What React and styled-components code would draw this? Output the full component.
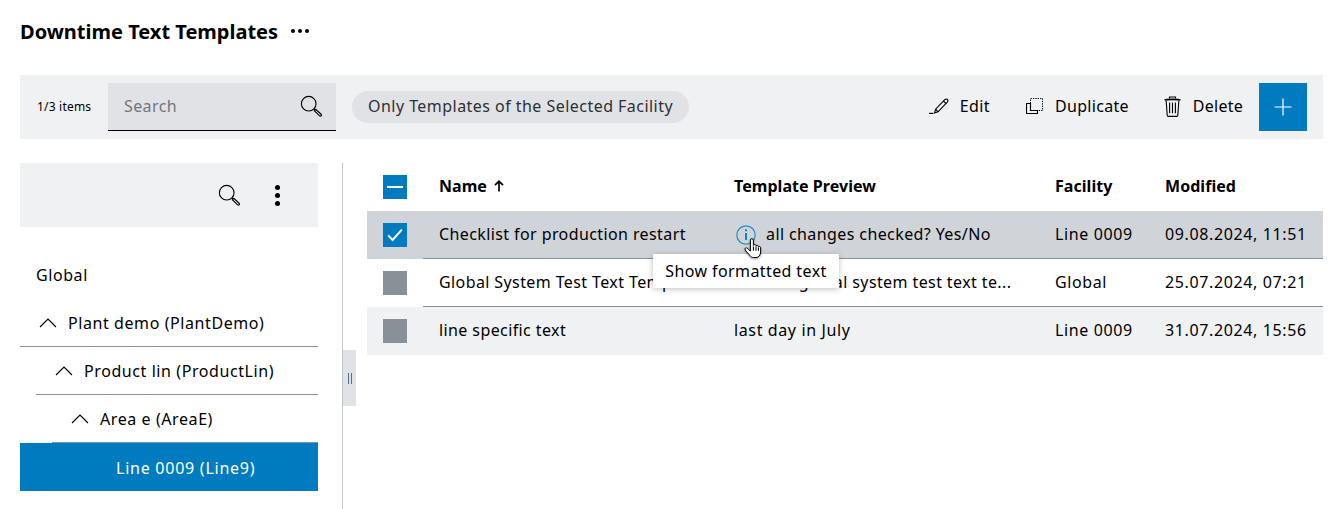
import React from "react";
import styled, { createGlobalStyle } from "styled-components";

const GlobalStyle = createGlobalStyle`
  html, body {
    margin: 0;
    padding: 0;
    background: #fff;
  }
  body {
    font-family: "Noto Sans", "Open Sans", sans-serif;
    font-size: 16px;
    letter-spacing: 0.4px;
    color: #000;
    overflow: hidden;
  }
`;

function SearchIcon() {
  return (
    <svg width="22" height="22" viewBox="0 0 24 24" fill="none" stroke="#000" strokeWidth="1.2">
      <circle cx="9.5" cy="9.5" r="8" />
      <path d="M15.2 15.2l1.2 1.2" />
      <path d="M15.6 17.2l1.6-1.6 5.8 5.4c.5.5.5 1.2 0 1.7-.5.4-1.1.4-1.6 0z" />
    </svg>
  );
}

function PencilIcon() {
  return (
    <svg width="20" height="16" viewBox="0 0 20 16" fill="none" stroke="#000" strokeWidth="1.1">
      <path d="M0 15.4h4.4" strokeWidth="1.2" />
      <path d="M5.6 15l1-3.8L15.8 1.6c.8-.8 1.9-.8 2.6-.1s.7 1.9-.1 2.6L9 13.8z" />
      <path d="M6.6 11.2L9 13.8M14.4 3l2.6 2.6" />
    </svg>
  );
}

function DuplicateIcon() {
  return (
    <svg width="17" height="16" viewBox="0 0 17 16" fill="none" stroke="#000">
      <path d="M4.5.5h12v12h-12z" strokeDasharray="1.3 1.1" strokeWidth="1" />
      <path d="M4.5 5.5h-4v10h11v-3h-7z" strokeWidth="1.1" />
    </svg>
  );
}

function TrashIcon() {
  return (
    <svg width="17" height="21" viewBox="0 0 17 21" fill="none" stroke="#000" strokeWidth="1.1">
      <path d="M5.5 2.6V1h6v1.6" />
      <path d="M.6 4.2c1.2-1.2 14.6-1.2 15.8 0" strokeWidth="1.8" />
      <path d="M2.2 5l1 14.2c0 .8.5 1.2 1.1 1.2h8.4c.6 0 1.1-.4 1.1-1.2L14.8 5" />
      <path d="M5.6 6.6v10.6M8.5 6.6v10.6M11.4 6.6v10.6" />
    </svg>
  );
}

function PlusIcon() {
  return (
    <svg width="18" height="18" viewBox="0 0 18 18" stroke="#fff" strokeWidth="1.2">
      <path d="M9 .5v17M.5 9h17" />
    </svg>
  );
}

function ChevronUp() {
  return (
    <svg width="18" height="10" viewBox="0 0 18 10" fill="none" stroke="#000" strokeWidth="1.1">
      <path d="M1 9l8-8 8 8" />
    </svg>
  );
}

function SortArrow() {
  return (
    <svg width="10" height="12" viewBox="0 0 10 12" fill="none" stroke="#000" strokeWidth="1.7">
      <path d="M5 11.5V1.5M1 5.2l4-4 4 4" />
    </svg>
  );
}

function CheckMark() {
  return (
    <svg width="16" height="14" viewBox="0 0 16 14" fill="none" stroke="#fff" strokeWidth="2">
      <path d="M1.2 7.4l4.4 4.6L14.8 1.6" />
    </svg>
  );
}

function InfoIcon() {
  return (
    <svg width="20" height="20" viewBox="0 0 20 20" fill="none" stroke="#1e8fd0" strokeWidth="1.2">
      <circle cx="10" cy="10" r="9.2" />
      <path d="M10 8v7" strokeWidth="1.8" stroke="#007bc0" />
      <path d="M10 4.2v2" strokeWidth="1.8" stroke="#007bc0" />
    </svg>
  );
}

function HandCursor() {
  return (
    <svg width="18" height="20" viewBox="0 0 18 20" fill="#fff" stroke="#000" strokeWidth="1" strokeLinejoin="round">
      <path d="M6.4 2c0-1.8 3-1.8 3 0v5.4c.3-1.2 2.4-1.2 2.6.2v.6c.3-1.1 2.3-1 2.4.3v.6c.4-1 2.2-.8 2.2.6v4.3c0 3-1.8 5.5-4.6 5.5H9.6c-1.8 0-3-.8-3.9-2.2L1.2 12c-1-1.7 1.2-3 2.4-1.6l2.8 2.8z" />
      <path d="M9.4 8.4v4.4M12 8.6v4.2M14.4 9.4v3.4" fill="none" />
    </svg>
  );
}

const Page = styled.div`
  width: 1338px;
  height: 509px;
  box-sizing: border-box;
  padding: 0 15px 0 20px;
  display: flex;
  flex-direction: column;
  overflow: hidden;
`;

const Header = styled.div`
  height: 63px;
  display: flex;
  align-items: center;
  gap: 13px;
  flex-shrink: 0;
`;

const Title = styled.h1`
  margin: 0;
  font-size: 20px;
  font-weight: 700;
  line-height: 28px;
  letter-spacing: 0;
`;

const Dots = styled.div`
  display: flex;
  gap: 3px;
  margin-top: -2px;
  span {
    width: 4px;
    height: 4px;
    border-radius: 50%;
    background: #000;
  }
`;

const Toolbar = styled.div`
  margin-top: 12px;
  height: 64px;
  background: #eff1f2;
  display: flex;
  align-items: center;
  padding: 0 16px 0 17px;
  flex-shrink: 0;
`;

const Count = styled.span`
  font-size: 12px;
  letter-spacing: 0.2px;
  width: 71px;
  padding-bottom: 1px;
`;

const SearchField = styled.div`
  width: 228px;
  height: 48px;
  box-sizing: border-box;
  background: #e0e2e5;
  border-bottom: 1px solid #000;
  display: flex;
  align-items: center;
  justify-content: space-between;
  padding: 0 14px 1px 16px;
  color: #71767c;
`;

const Chip = styled.div`
  margin-left: 16px;
  height: 32px;
  box-sizing: border-box;
  padding: 0 16px 2px;
  border-radius: 16px;
  background: #e0e2e5;
  display: flex;
  align-items: center;
  color: #2e3033;
  letter-spacing: 0.46px;
`;

const Actions = styled.div`
  margin-left: auto;
  display: flex;
  align-items: center;
`;

const ActionButton = styled.div`
  display: flex;
  align-items: center;
  gap: ${(p) => p.$gap}px;
  margin-right: ${(p) => p.$right}px;
  padding-bottom: 2px;
  letter-spacing: ${(p) => p.$spacing}px;
`;

const AddButton = styled.div`
  width: 48px;
  height: 48px;
  background: #007bc0;
  display: flex;
  align-items: center;
  justify-content: center;
`;

const Content = styled.div`
  margin-top: 24px;
  flex: 1;
  display: flex;
  min-height: 0;
`;

const Sidebar = styled.div`
  width: 298px;
  flex-shrink: 0;
`;

const SidebarBar = styled.div`
  height: 64px;
  background: #eff1f2;
  display: flex;
  align-items: center;
  justify-content: flex-end;
  padding-right: 38px;
  gap: 35px;
`;

const VerticalDots = styled.div`
  display: flex;
  flex-direction: column;
  gap: 3px;
  span {
    width: 5px;
    height: 5px;
    border-radius: 50%;
    background: #000;
  }
`;

const Tree = styled.div`
  margin-top: 24px;
`;

const TreeRow = styled.div`
  height: 48px;
  box-sizing: border-box;
  margin-left: ${(p) => p.$indent}px;
  padding-left: ${(p) => p.$pad}px;
  display: flex;
  align-items: center;
  gap: 11px;
  letter-spacing: 0.58px;
  border-bottom: ${(p) => (p.$line ? "1px solid #8a9097" : "none")};
`;

const SelectedRow = styled.div`
  height: 48px;
  box-sizing: border-box;
  background: #007bc0;
  color: #fff;
  display: flex;
  align-items: center;
  padding: 1px 0 0 96px;
  letter-spacing: 0.75px;
`;

const Splitter = styled.div`
  width: 25px;
  margin-left: 24px;
  flex-shrink: 0;
  border-left: 1px solid #c1c7cc;
  box-sizing: border-box;
  display: flex;
  align-items: flex-start;
`;

const SplitterHandle = styled.div`
  margin-top: 187px;
  width: 13px;
  height: 56px;
  background: #e0e2e5;
  display: flex;
  align-items: center;
  justify-content: center;
  gap: 2px;
  span {
    width: 1px;
    height: 11px;
    background: #4a6f94;
  }
`;

const Table = styled.div`
  flex: 1;
  min-width: 0;
`;

const Row = styled.div`
  height: 48px;
  display: grid;
  grid-template-columns: 56px 295px 321px 110px 1fr;
  background: ${(p) => p.$bg};
`;

const CheckCell = styled.div`
  display: flex;
  align-items: center;
  padding-left: 16px;
`;

const Cell = styled.div`
  position: relative;
  display: flex;
  align-items: center;
  gap: 7px;
  padding: 0 0 ${(p) => (p.$line ? 1 : 2)}px 16px;
  white-space: nowrap;
  font-weight: ${(p) => (p.$head ? 700 : 400)};
  letter-spacing: ${(p) => (p.$head ? "0.05px" : p.$digits ? "0.62px" : "0.4px")};
  box-sizing: border-box;
  border-bottom: ${(p) => (p.$line ? "1px solid #8a9097" : "none")};
`;

const Box = styled.div`
  width: 24px;
  height: 24px;
  background: ${(p) => (p.$on ? "#007bc0" : "#8a9097")};
  display: flex;
  align-items: center;
  justify-content: center;
`;

const Dash = styled.span`
  width: 16px;
  height: 2px;
  background: #fff;
`;

const InfoWrap = styled.span`
  display: flex;
  margin: 1px 3px 0 2px;
`;

const Tooltip = styled.div`
  position: absolute;
  left: -65px;
  top: 43px;
  width: 186px;
  height: 34px;
  padding-bottom: 1px;
  box-sizing: border-box;
  background: #fff;
  box-shadow: 0 1px 6px rgba(0, 0, 0, 0.25);
  display: flex;
  align-items: center;
  justify-content: center;
  font-weight: 400;
  z-index: 2;
`;

const Cursor = styled.div`
  position: absolute;
  left: 26px;
  top: 27px;
  display: flex;
  z-index: 3;
  filter: drop-shadow(0 1px 1px rgba(0, 0, 0, 0.4));
`;

const rows = [
  { name: "Global System Test Text Template", preview: "this is a global system test text te...", facility: "Global", modified: "25.07.2024, 07:21", bg: "#fff", line: true },
  { name: "line specific text", preview: "last day in July", facility: "Line 0009", modified: "31.07.2024, 15:56", bg: "#eff1f2" },
];

export default function App() {
  return (
    <>
      <GlobalStyle />
      <Page>
        <Header>
          <Title>Downtime Text Templates</Title>
          <Dots><span /><span /><span /></Dots>
        </Header>
        <Toolbar>
          <Count>1/3 items</Count>
          <SearchField>
            Search
            <SearchIcon />
          </SearchField>
          <Chip>Only Templates of the Selected Facility</Chip>
          <Actions>
            <ActionButton $gap={11} $right={36} $spacing={0.4}><PencilIcon />Edit</ActionButton>
            <ActionButton $gap={12} $right={35} $spacing={0.3}><DuplicateIcon />Duplicate</ActionButton>
            <ActionButton $gap={12} $right={16} $spacing={0.25}><TrashIcon />Delete</ActionButton>
            <AddButton><PlusIcon /></AddButton>
          </Actions>
        </Toolbar>
        <Content>
          <Sidebar>
            <SidebarBar>
              <SearchIcon />
              <VerticalDots><span /><span /><span /></VerticalDots>
            </SidebarBar>
            <Tree>
              <TreeRow $indent={0} $pad={16}>Global</TreeRow>
              <TreeRow $indent={0} $pad={19} $line><ChevronUp />Plant demo (PlantDemo)</TreeRow>
              <TreeRow $indent={16} $pad={19} $line><ChevronUp />Product lin (ProductLin)</TreeRow>
              <TreeRow $indent={32} $pad={19} $line><ChevronUp />Area e (AreaE)</TreeRow>
              <SelectedRow>Line 0009 (Line9)</SelectedRow>
            </Tree>
          </Sidebar>
          <Splitter>
            <SplitterHandle><span /><span /></SplitterHandle>
          </Splitter>
          <Table>
            <Row $bg="#fff">
              <CheckCell><Box $on><Dash /></Box></CheckCell>
              <Cell $head>Name <SortArrow /></Cell>
              <Cell $head>Template Preview</Cell>
              <Cell $head>Facility</Cell>
              <Cell $head>Modified</Cell>
            </Row>
            <Row $bg="#d0d4d8">
              <CheckCell><Box $on><CheckMark /></Box></CheckCell>
              <Cell $line>Checklist for production restart</Cell>
              <Cell $line>
                <InfoWrap><InfoIcon /></InfoWrap>
                all changes checked? Yes/No
                <Tooltip>Show formatted text</Tooltip>
                <Cursor><HandCursor /></Cursor>
              </Cell>
              <Cell $line $digits>Line 0009</Cell>
              <Cell $line $digits>09.08.2024, 11:51</Cell>
            </Row>
            {rows.map((r) => (
              <Row $bg={r.bg} key={r.name}>
                <CheckCell><Box /></CheckCell>
                <Cell $line={r.line}>{r.name}</Cell>
                <Cell $line={r.line} $digits={r.preview === "last day in July"}>{r.preview}</Cell>
                <Cell $line={r.line} $digits>{r.facility}</Cell>
                <Cell $line={r.line} $digits>{r.modified}</Cell>
              </Row>
            ))}
          </Table>
        </Content>
      </Page>
    </>
  );
}
